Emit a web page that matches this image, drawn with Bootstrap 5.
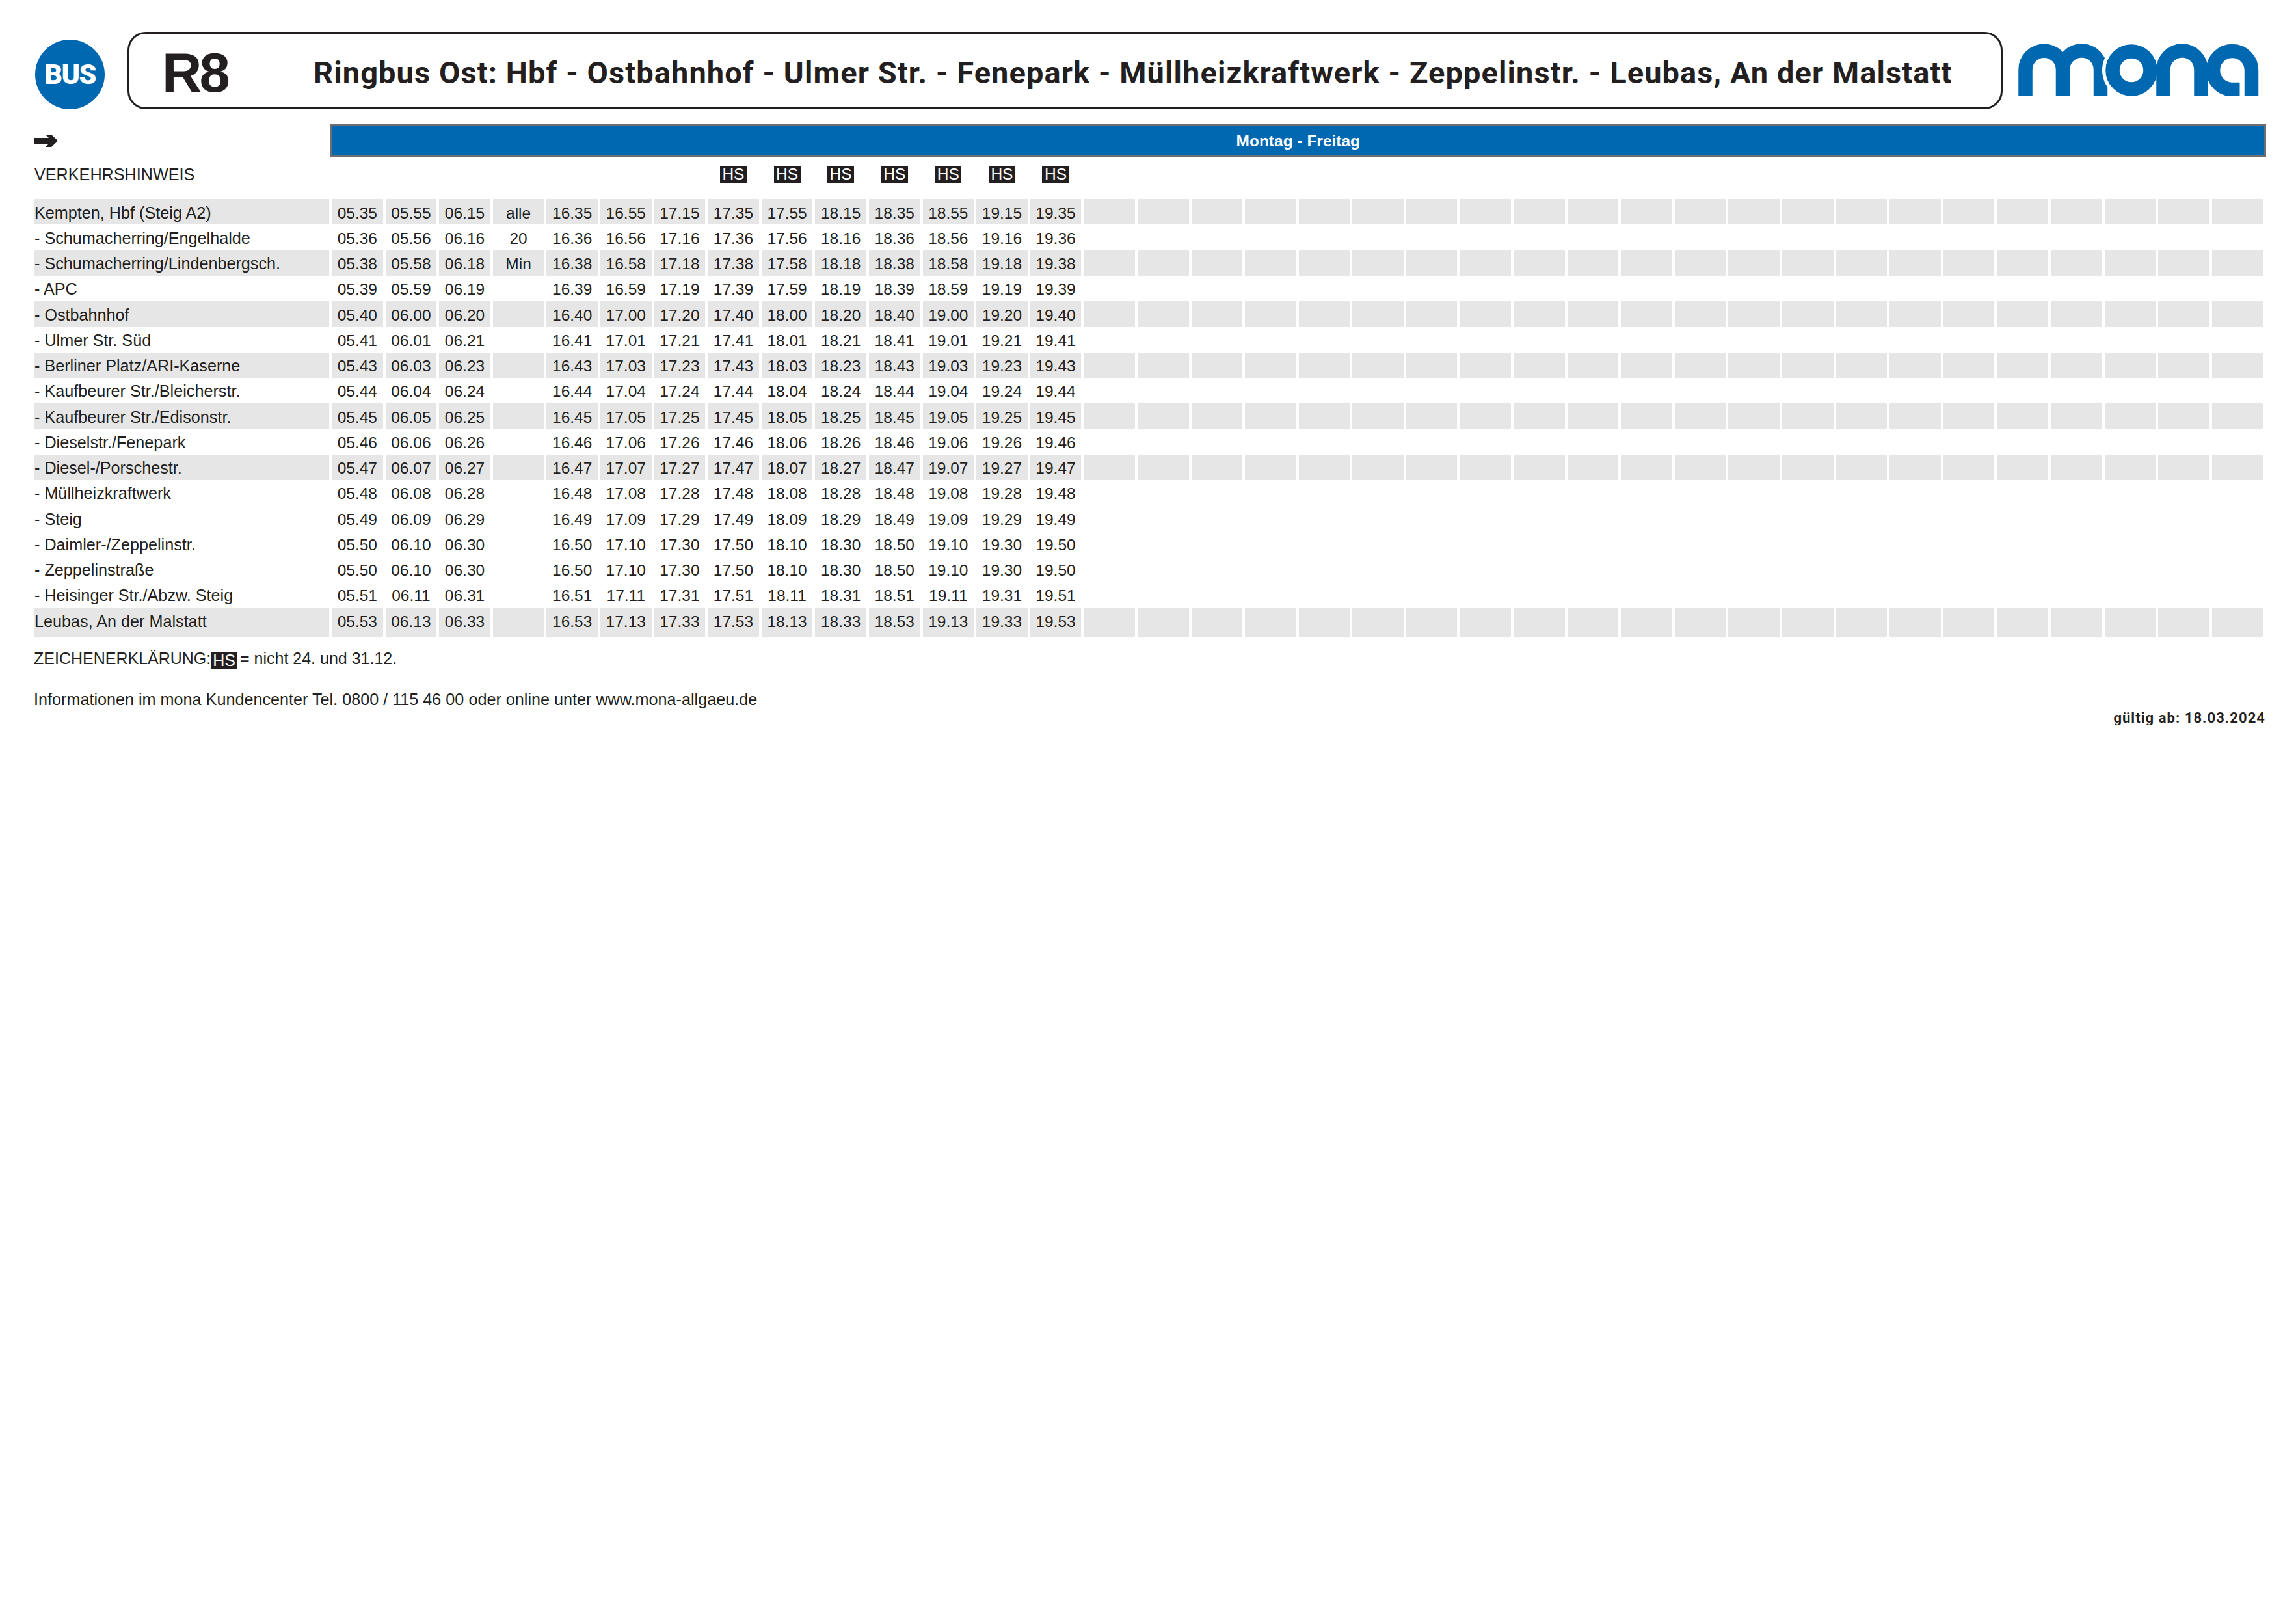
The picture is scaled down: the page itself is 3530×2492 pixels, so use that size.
<!DOCTYPE html>
<html lang="de">
<head>
<meta charset="utf-8">
<title>R8 Ringbus Ost</title>
<link href="https://cdn.jsdelivr.net/npm/bootstrap@5.3.0/dist/css/bootstrap.min.css" rel="stylesheet">
<style>
body{background:#fff;color:#231f20;font-family:"Liberation Sans",Arial,sans-serif;font-size:24px;}
.blatt{padding:49px 47px 0 48px;}
.kopf{gap:0;height:119px;margin-bottom:22px;}
.busrund{width:107px;height:107px;margin:12px 0 0 6px;background:#0067b1;color:#fff;font:900 43px/1 Roboto,sans-serif;letter-spacing:-1.6px;flex:none;}
.titelbox{flex:1;margin-left:35px;height:119px;border:3px solid #231f20;border-radius:28px;padding:6px 0 0 50px;}
.liniennr{font:700 85px/1 "Liberation Sans",sans-serif;letter-spacing:-4px;width:233px;color:#231f20;}
.linientext{font:700 47px/1 Roboto,sans-serif;color:#231f20;white-space:nowrap;letter-spacing:1.08px;}
.logo{width:370px;height:81px;margin:18px 10px 0 24px;flex:none;}
.fahrplan{table-layout:fixed;width:3435.6px;border-collapse:separate;border-spacing:4px 0;margin:0;--bs-table-bg:transparent;font-size:24.5px;}
.table.fahrplan>:not(caption)>*>*{padding:3.5px 0 0;color:#231f20;border:0;background-color:transparent;vertical-align:top;text-align:center;line-height:35.25px;height:39.25px;white-space:nowrap;box-shadow:none;}
.table.fahrplan>:not(caption)>*>.haltestelle{text-align:left;font-size:25.2px;padding-left:1px;}
.table.fahrplan>:not(caption)>tr.grau>*{background-color:#e6e6e6;}
.table.fahrplan>:not(caption)>tr.ende>*{height:45px;}
.table.fahrplan>thead>tr.tagzeile>*{height:52px;line-height:52px;padding:0;}
.table.fahrplan>thead>tr.hinweis>*{height:64px;line-height:52px;padding-top:0;}
.tagbalken{margin:0 -4px 0 -2px;height:52px;background:#0067b1;border:3px solid #6d6e71;color:#fff;font-weight:700;font-size:24.5px;line-height:47px;}
.pfeil{width:37px;height:19px;display:block;margin-top:17px;}
.hsmark{display:inline-block;background:#231f20;color:#fff;font-size:24.5px;line-height:26px;height:26px;padding:0 3.5px;vertical-align:top;margin-top:13px;}
.legende{margin:14px 0 0 4px;line-height:39px;font-size:25px;}
.legende .hsmark{height:27px;line-height:27px;font-size:25px;padding:0 3px;margin:0 4px 0 0;vertical-align:-3px;}
.fussinfo{margin:24px 0 0 4px;line-height:39px;font-size:25.2px;}
.gueltig{font:700 22px/1 Roboto,sans-serif;letter-spacing:1.05px;margin-top:-2px;text-align:right;}
</style>
</head>
<body>
<div class="blatt">
  <header class="kopf d-flex">
    <div class="busrund rounded-circle d-flex align-items-center justify-content-center">BUS</div>
    <div class="titelbox d-flex align-items-center">
      <div class="liniennr">R8</div>
      <div class="linientext">Ringbus Ost: Hbf - Ostbahnhof - Ulmer Str. - Fenepark - Müllheizkraftwerk - Zeppelinstr. - Leubas, An der Malstatt</div>
    </div>
    <svg class="logo" viewBox="204 66 370 81" aria-label="mona">
      <g fill="none" stroke="#0067b1" stroke-width="21.5">
        <path d="M215 147V106A28.75 28.75 0 0 1 272.5 106V147M272.5 106A29 29 0 0 1 330.5 106V147"/>
        <circle cx="378" cy="107" r="45" fill="#fff" stroke="none"/>
        <circle cx="378" cy="107" r="29"/>
        <path d="M427 146V106A29 29 0 0 1 485 106V146"/>
        <path d="M544.5 136.5H533A29.5 29.5 0 1 1 562.5 107V146"/>
      </g>
    </svg>
  </header>

  <table class="table table-borderless fahrplan">
    <colgroup><col style="width:454px"><col span="36"></colgroup>
    <thead>
      <tr class="tagzeile">
        <th scope="col">
          <svg class="pfeil" viewBox="0 0 37 19"><path fill="#231f20" d="M0 5H23L18 0H27L37 9.5L27 19H18L23 14H0Z"/></svg>
        </th>
        <th scope="col" colspan="36"><div class="tagbalken">Montag - Freitag</div></th>
      </tr>
      <tr class="hinweis fw-normal">
        <td class="haltestelle">VERKEHRSHINWEIS</td>
        <td colspan="7"></td>
        <td><span class="hsmark">HS</span></td><td><span class="hsmark">HS</span></td><td><span class="hsmark">HS</span></td><td><span class="hsmark">HS</span></td><td><span class="hsmark">HS</span></td><td><span class="hsmark">HS</span></td><td><span class="hsmark">HS</span></td>
        <td colspan="22"></td>
      </tr>
    </thead>
    <tbody>
      <tr class="grau"><td class="haltestelle">Kempten, Hbf (Steig A2)</td><td>05.35</td><td>05.55</td><td>06.15</td><td>alle</td><td>16.35</td><td>16.55</td><td>17.15</td><td>17.35</td><td>17.55</td><td>18.15</td><td>18.35</td><td>18.55</td><td>19.15</td><td>19.35</td><td></td><td></td><td></td><td></td><td></td><td></td><td></td><td></td><td></td><td></td><td></td><td></td><td></td><td></td><td></td><td></td><td></td><td></td><td></td><td></td><td></td><td></td></tr>
      <tr><td class="haltestelle">- Schumacherring/Engelhalde</td><td>05.36</td><td>05.56</td><td>06.16</td><td>20</td><td>16.36</td><td>16.56</td><td>17.16</td><td>17.36</td><td>17.56</td><td>18.16</td><td>18.36</td><td>18.56</td><td>19.16</td><td>19.36</td><td colspan="22"></td></tr>
      <tr class="grau"><td class="haltestelle">- Schumacherring/Lindenbergsch.</td><td>05.38</td><td>05.58</td><td>06.18</td><td>Min</td><td>16.38</td><td>16.58</td><td>17.18</td><td>17.38</td><td>17.58</td><td>18.18</td><td>18.38</td><td>18.58</td><td>19.18</td><td>19.38</td><td></td><td></td><td></td><td></td><td></td><td></td><td></td><td></td><td></td><td></td><td></td><td></td><td></td><td></td><td></td><td></td><td></td><td></td><td></td><td></td><td></td><td></td></tr>
      <tr><td class="haltestelle">- APC</td><td>05.39</td><td>05.59</td><td>06.19</td><td></td><td>16.39</td><td>16.59</td><td>17.19</td><td>17.39</td><td>17.59</td><td>18.19</td><td>18.39</td><td>18.59</td><td>19.19</td><td>19.39</td><td colspan="22"></td></tr>
      <tr class="grau"><td class="haltestelle">- Ostbahnhof</td><td>05.40</td><td>06.00</td><td>06.20</td><td></td><td>16.40</td><td>17.00</td><td>17.20</td><td>17.40</td><td>18.00</td><td>18.20</td><td>18.40</td><td>19.00</td><td>19.20</td><td>19.40</td><td></td><td></td><td></td><td></td><td></td><td></td><td></td><td></td><td></td><td></td><td></td><td></td><td></td><td></td><td></td><td></td><td></td><td></td><td></td><td></td><td></td><td></td></tr>
      <tr><td class="haltestelle">- Ulmer Str. Süd</td><td>05.41</td><td>06.01</td><td>06.21</td><td></td><td>16.41</td><td>17.01</td><td>17.21</td><td>17.41</td><td>18.01</td><td>18.21</td><td>18.41</td><td>19.01</td><td>19.21</td><td>19.41</td><td colspan="22"></td></tr>
      <tr class="grau"><td class="haltestelle">- Berliner Platz/ARI-Kaserne</td><td>05.43</td><td>06.03</td><td>06.23</td><td></td><td>16.43</td><td>17.03</td><td>17.23</td><td>17.43</td><td>18.03</td><td>18.23</td><td>18.43</td><td>19.03</td><td>19.23</td><td>19.43</td><td></td><td></td><td></td><td></td><td></td><td></td><td></td><td></td><td></td><td></td><td></td><td></td><td></td><td></td><td></td><td></td><td></td><td></td><td></td><td></td><td></td><td></td></tr>
      <tr><td class="haltestelle">- Kaufbeurer Str./Bleicherstr.</td><td>05.44</td><td>06.04</td><td>06.24</td><td></td><td>16.44</td><td>17.04</td><td>17.24</td><td>17.44</td><td>18.04</td><td>18.24</td><td>18.44</td><td>19.04</td><td>19.24</td><td>19.44</td><td colspan="22"></td></tr>
      <tr class="grau"><td class="haltestelle">- Kaufbeurer Str./Edisonstr.</td><td>05.45</td><td>06.05</td><td>06.25</td><td></td><td>16.45</td><td>17.05</td><td>17.25</td><td>17.45</td><td>18.05</td><td>18.25</td><td>18.45</td><td>19.05</td><td>19.25</td><td>19.45</td><td></td><td></td><td></td><td></td><td></td><td></td><td></td><td></td><td></td><td></td><td></td><td></td><td></td><td></td><td></td><td></td><td></td><td></td><td></td><td></td><td></td><td></td></tr>
      <tr><td class="haltestelle">- Dieselstr./Fenepark</td><td>05.46</td><td>06.06</td><td>06.26</td><td></td><td>16.46</td><td>17.06</td><td>17.26</td><td>17.46</td><td>18.06</td><td>18.26</td><td>18.46</td><td>19.06</td><td>19.26</td><td>19.46</td><td colspan="22"></td></tr>
      <tr class="grau"><td class="haltestelle">- Diesel-/Porschestr.</td><td>05.47</td><td>06.07</td><td>06.27</td><td></td><td>16.47</td><td>17.07</td><td>17.27</td><td>17.47</td><td>18.07</td><td>18.27</td><td>18.47</td><td>19.07</td><td>19.27</td><td>19.47</td><td></td><td></td><td></td><td></td><td></td><td></td><td></td><td></td><td></td><td></td><td></td><td></td><td></td><td></td><td></td><td></td><td></td><td></td><td></td><td></td><td></td><td></td></tr>
      <tr><td class="haltestelle">- Müllheizkraftwerk</td><td>05.48</td><td>06.08</td><td>06.28</td><td></td><td>16.48</td><td>17.08</td><td>17.28</td><td>17.48</td><td>18.08</td><td>18.28</td><td>18.48</td><td>19.08</td><td>19.28</td><td>19.48</td><td colspan="22"></td></tr>
      <tr><td class="haltestelle">- Steig</td><td>05.49</td><td>06.09</td><td>06.29</td><td></td><td>16.49</td><td>17.09</td><td>17.29</td><td>17.49</td><td>18.09</td><td>18.29</td><td>18.49</td><td>19.09</td><td>19.29</td><td>19.49</td><td colspan="22"></td></tr>
      <tr><td class="haltestelle">- Daimler-/Zeppelinstr.</td><td>05.50</td><td>06.10</td><td>06.30</td><td></td><td>16.50</td><td>17.10</td><td>17.30</td><td>17.50</td><td>18.10</td><td>18.30</td><td>18.50</td><td>19.10</td><td>19.30</td><td>19.50</td><td colspan="22"></td></tr>
      <tr><td class="haltestelle">- Zeppelinstraße</td><td>05.50</td><td>06.10</td><td>06.30</td><td></td><td>16.50</td><td>17.10</td><td>17.30</td><td>17.50</td><td>18.10</td><td>18.30</td><td>18.50</td><td>19.10</td><td>19.30</td><td>19.50</td><td colspan="22"></td></tr>
      <tr><td class="haltestelle">- Heisinger Str./Abzw. Steig</td><td>05.51</td><td>06.11</td><td>06.31</td><td></td><td>16.51</td><td>17.11</td><td>17.31</td><td>17.51</td><td>18.11</td><td>18.31</td><td>18.51</td><td>19.11</td><td>19.31</td><td>19.51</td><td colspan="22"></td></tr>
      <tr class="grau ende"><td class="haltestelle">Leubas, An der Malstatt</td><td>05.53</td><td>06.13</td><td>06.33</td><td></td><td>16.53</td><td>17.13</td><td>17.33</td><td>17.53</td><td>18.13</td><td>18.33</td><td>18.53</td><td>19.13</td><td>19.33</td><td>19.53</td><td></td><td></td><td></td><td></td><td></td><td></td><td></td><td></td><td></td><td></td><td></td><td></td><td></td><td></td><td></td><td></td><td></td><td></td><td></td><td></td><td></td><td></td></tr>
    </tbody>
  </table>

  <p class="legende mb-0">ZEICHENERKLÄRUNG:<span class="hsmark">HS</span>= nicht 24. und 31.12.</p>
  <p class="fussinfo mb-0">Informationen im mona Kundencenter Tel. 0800 / 115 46 00 oder online unter www.mona-allgaeu.de</p>
  <p class="gueltig mb-0">gültig ab: 18.03.2024</p>
</div>
<script src="https://cdn.jsdelivr.net/npm/bootstrap@5.3.0/dist/js/bootstrap.bundle.min.js"></script>
</body>
</html>
